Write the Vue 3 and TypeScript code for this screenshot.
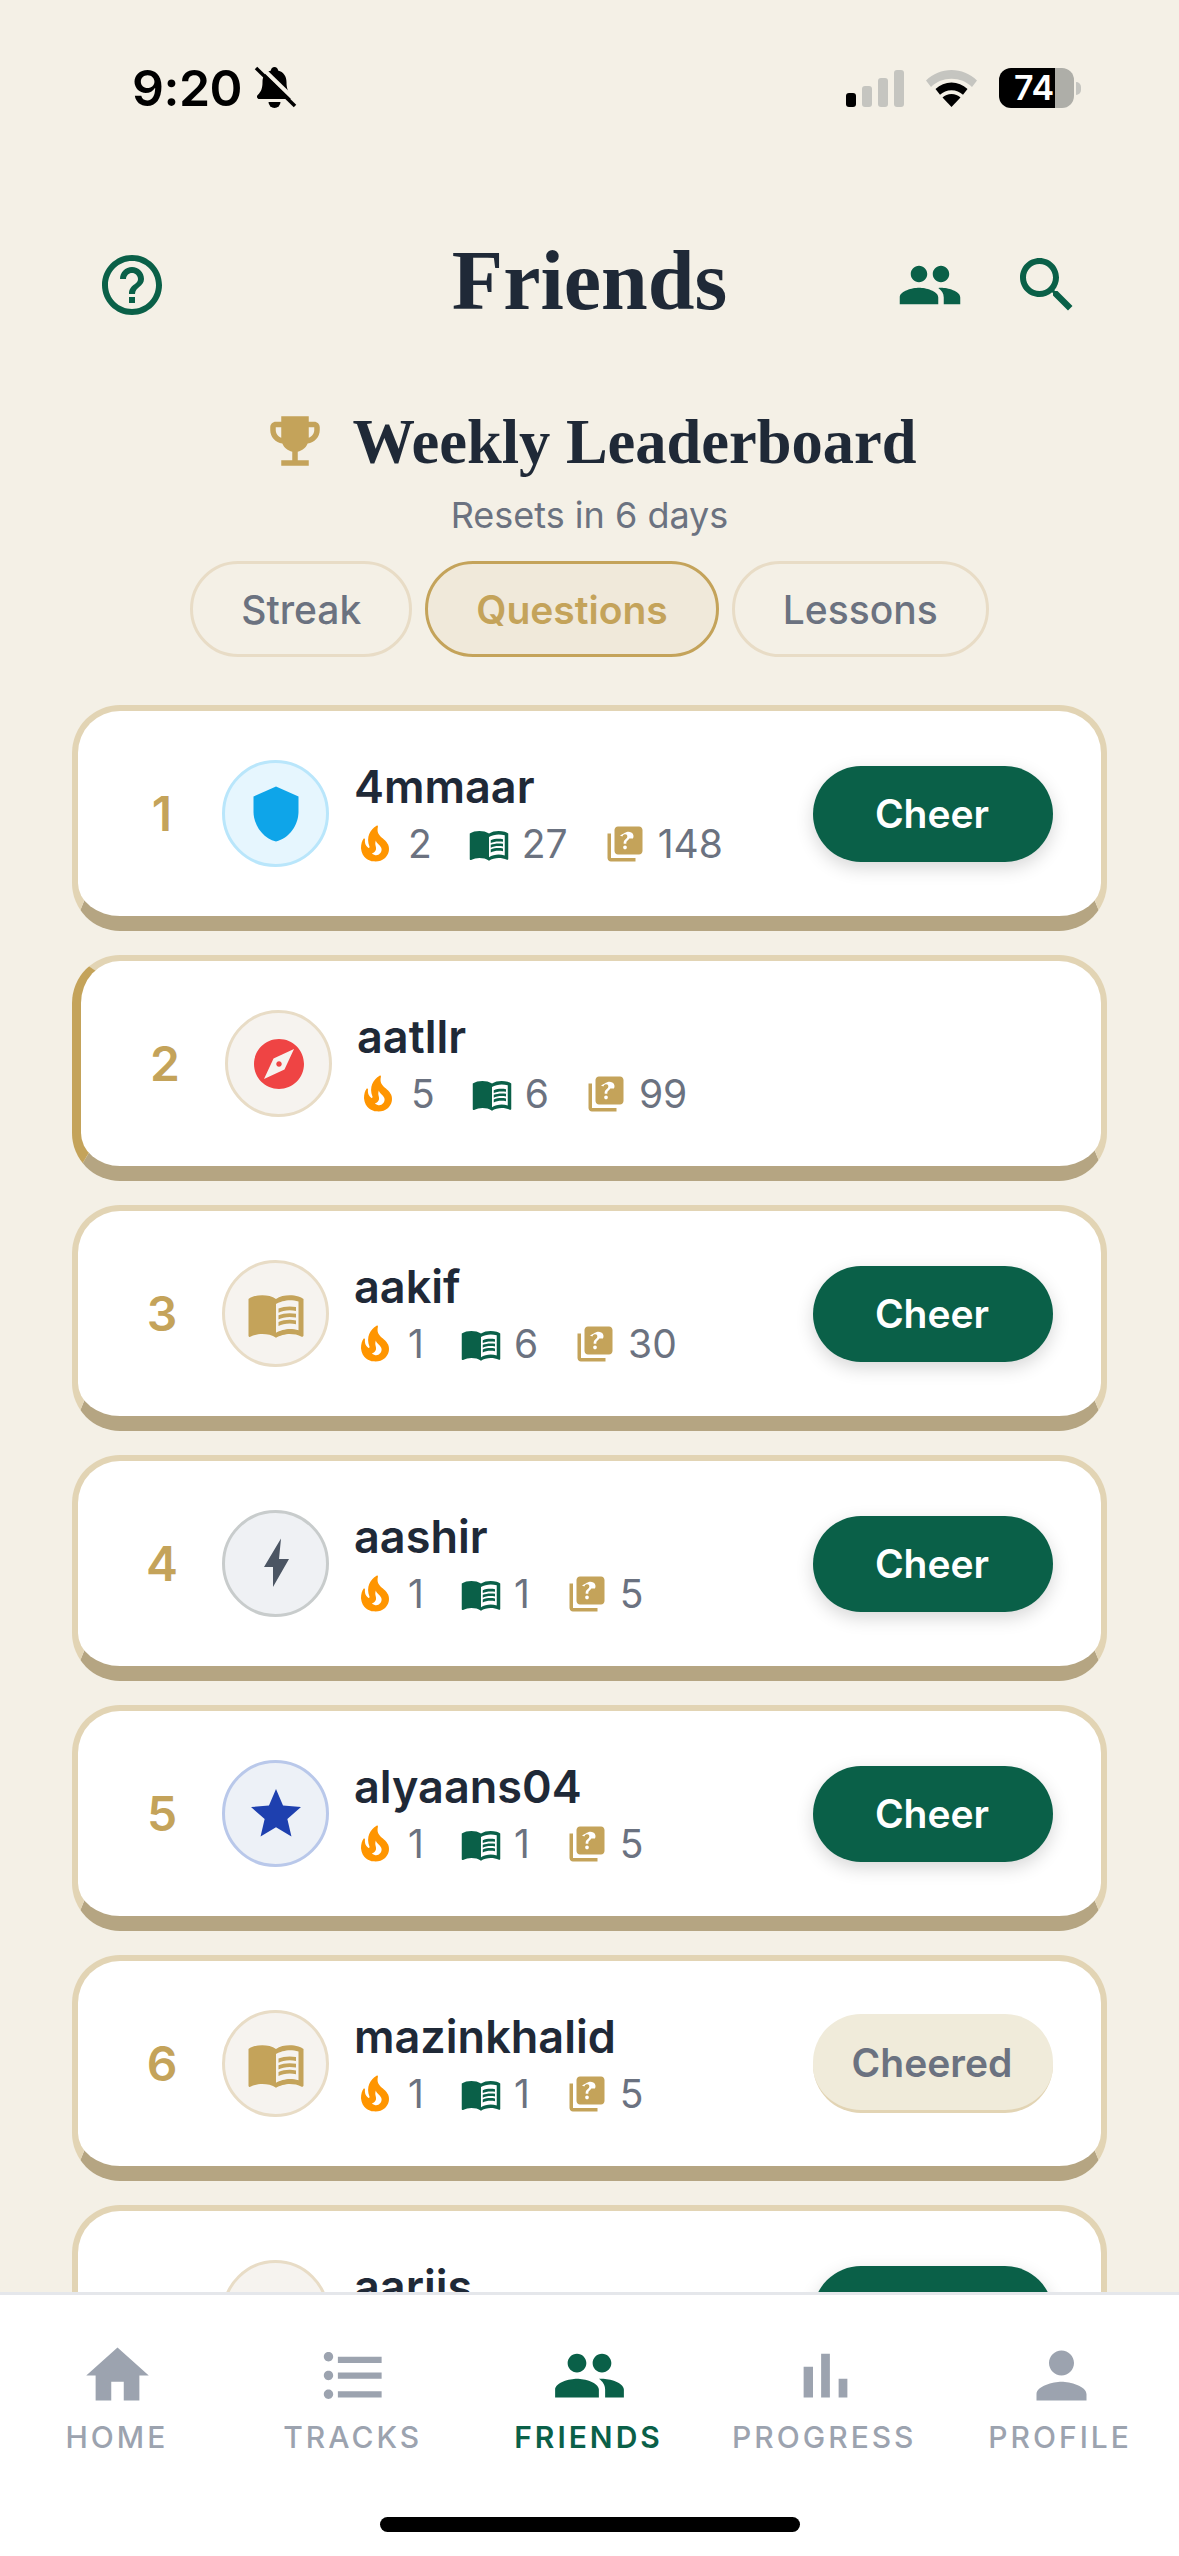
<script setup lang="ts">
type Icon = 'shield' | 'compass' | 'book' | 'bolt' | 'star'

interface Row {
  rank: number
  name: string
  streak: number
  lessons: number
  questions: number
  icon: Icon
  tone: string
  button: 'cheer' | 'cheered' | 'none'
  self?: boolean
}

const paths = {
  help: 'M11 18h2v-2h-2v2zm1-16C6.48 2 2 6.48 2 12s4.48 10 10 10 10-4.48 10-10S17.52 2 12 2zm0 18c-4.41 0-8-3.59-8-8s3.59-8 8-8 8 3.59 8 8-3.59 8-8 8zm0-14c-2.21 0-4 1.79-4 4h2c0-1.1.9-2 2-2s2 .9 2 2c0 2-3 1.75-3 5h2c0-2.25 3-2.5 3-5 0-2.21-1.79-4-4-4z',
  people: 'M16 11c1.66 0 2.99-1.34 2.99-3S17.66 5 16 5c-1.66 0-3 1.34-3 3s1.34 3 3 3zm-8 0c1.66 0 2.99-1.34 2.99-3S9.66 5 8 5C6.34 5 5 6.34 5 8s1.34 3 3 3zm0 2c-2.33 0-7 1.17-7 3.5V19h14v-2.5c0-2.33-4.67-3.5-7-3.5zm8 0c-.29 0-.62.02-.97.05 1.16.84 1.97 1.97 1.97 3.45V19h6v-2.5c0-2.33-4.67-3.5-7-3.5z',
  search: 'M15.5 14h-.79l-.28-.27C15.41 12.59 16 11.11 16 9.5 16 5.91 13.09 3 9.5 3S3 5.91 3 9.5 5.91 16 9.5 16c1.61 0 3.09-.59 4.23-1.57l.27.28v.79l5 4.99L20.49 19l-4.99-5zm-6 0C7.01 14 5 11.99 5 9.5S7.01 5 9.5 5 14 7.01 14 9.5 11.99 14 9.5 14z',
  trophy: 'M19 5h-2V3H7v2H5c-1.1 0-2 .9-2 2v1c0 2.55 1.92 4.63 4.39 4.94.63 1.5 1.98 2.63 3.61 2.96V19H7v2h10v-2h-4v-3.1c1.63-.33 2.98-1.46 3.61-2.96C19.08 12.63 21 10.55 21 8V7c0-1.1-.9-2-2-2zM5 8V7h2v3.82C5.84 10.4 5 9.3 5 8zm14 0c0 1.3-.84 2.4-2 2.82V7h2v1z',
  fire: 'M19.48 12.35c-1.57-4.08-7.16-4.3-5.81-10.23.1-.44-.37-.78-.75-.55C9.29 3.71 6.68 8 8.87 13.62c.18.46-.36.89-.75.59-1.81-1.37-2-3.34-1.84-4.75.06-.52-.62-.77-.91-.34C4.69 10.16 4 11.84 4 14.37c.38 5.6 5.11 7.32 6.81 7.54 2.43.31 5.06-.14 6.95-1.87 2.08-1.93 2.84-5.01 1.72-7.69zm-9.28 5.03c1.44-.35 2.18-1.39 2.38-2.31.33-1.43-.96-2.83-.09-5.09.33 1.87 3.27 3.04 3.27 5.08.08 2.53-2.66 4.7-5.56 2.32z',
  book: 'M21 5c-1.11-.35-2.33-.5-3.5-.5-1.95 0-4.05.4-5.5 1.5-1.45-1.1-3.55-1.5-5.5-1.5S2.45 4.9 1 6v14.65c0 .25.25.5.5.5.1 0 .15-.05.25-.05C3.1 20.45 5.05 20 6.5 20c1.95 0 4.05.4 5.5 1.5 1.35-.85 3.8-1.5 5.5-1.5 1.65 0 3.35.3 4.75 1.05.1.05.15.05.25.05.25 0 .5-.25.5-.5V6c-.6-.45-1.25-.75-2-1zm0 13.5c-1.1-.35-2.3-.5-3.5-.5-1.7 0-4.15.65-5.5 1.5V8c1.35-.85 3.8-1.5 5.5-1.5 1.2 0 2.4.15 3.5.5v11.5zM17.5 10.5c.88 0 1.73.09 2.5.26V9.24c-.79-.15-1.64-.24-2.5-.24-1.7 0-3.24.29-4.5.83v1.66c1.13-.64 2.7-.99 4.5-.99zM13 12.49v1.66c1.13-.64 2.7-.99 4.5-.99.88 0 1.73.09 2.5.26V11.9c-.79-.15-1.64-.24-2.5-.24-1.7 0-3.24.3-4.5.83zM17.5 14.33c-1.7 0-3.24.29-4.5.83v1.66c1.13-.64 2.7-.99 4.5-.99.88 0 1.73.09 2.5.26v-1.52c-.79-.16-1.64-.24-2.5-.24z',
  quiz: 'M4 6H2v14c0 1.1.9 2 2 2h14v-2H4V6zm16-4H8c-1.1 0-2 .9-2 2v12c0 1.1.9 2 2 2h12c1.1 0 2-.9 2-2V4c0-1.1-.9-2-2-2zm-7.99 13c-.59 0-1.05-.47-1.05-1.05 0-.59.47-1.04 1.05-1.04.59 0 1.04.45 1.04 1.04 0 .58-.45 1.05-1.04 1.05zm2.5-6.17c-.63.93-1.23 1.21-1.56 1.81-.13.24-.18.4-.18 1.18h-1.52c0-.41-.06-1.08.26-1.65.41-.73 1.18-1.16 1.63-1.8.48-.68.21-1.94-1.14-1.94-.88 0-1.32.67-1.5 1.23l-1.37-.57C11.51 5.96 12.52 5 13.99 5c1.23 0 2.08.56 2.51 1.26.37.61.58 1.73.01 2.57z',
  shield: 'M12 1 3 5v6c0 5.55 3.84 10.74 9 12 5.16-1.26 9-6.45 9-12V5l-9-4z',
  compass: 'M12 10.9c-.61 0-1.1.49-1.1 1.1s.49 1.1 1.1 1.1c.61 0 1.1-.49 1.1-1.1s-.49-1.1-1.1-1.1zM12 2C6.48 2 2 6.48 2 12s4.48 10 10 10 10-4.48 10-10S17.52 2 12 2zm2.19 12.19L6 18l3.81-8.19L18 6l-3.81 8.19z',
  bolt: 'M14 1.8 7.2 13.2h3.6v8L17.2 10h-4z',
  star: 'M12 17.27 18.18 21l-1.64-7.03L22 9.24l-7.19-.61L12 2 9.19 8.63 2 9.24l5.46 4.73L5.82 21z',
  home: 'M10 20v-6h4v6h5v-8h3L12 3 2 12h3v8z',
  list: 'M4 10.5c-.83 0-1.5.67-1.5 1.5s.67 1.5 1.5 1.5 1.5-.67 1.5-1.5-.67-1.5-1.5-1.5zm0-6c-.83 0-1.5.67-1.5 1.5S3.17 7.5 4 7.5 5.5 6.83 5.5 6 4.83 4.5 4 4.5zm0 12c-.83 0-1.5.68-1.5 1.5s.68 1.5 1.5 1.5 1.5-.68 1.5-1.5-.67-1.5-1.5-1.5zM7 19h14v-2H7v2zm0-6h14v-2H7v2zm0-7v2h14V6H7z',
  chart: 'M5 9.2h3V19H5zM10.6 5h2.8v14h-2.8zm5.6 8H19v6h-2.8z',
  person: 'M12 12c2.21 0 4-1.79 4-4s-1.79-4-4-4-4 1.79-4 4 1.79 4 4 4zm0 2c-2.67 0-8 1.34-8 4v2h16v-2c0-2.66-5.33-4-8-4z',
}

const rows: Row[] = [
  { rank: 1, name: '4mmaar', streak: 2, lessons: 27, questions: 148, icon: 'shield', tone: 'sky', button: 'cheer' },
  { rank: 2, name: 'aatllr', streak: 5, lessons: 6, questions: 99, icon: 'compass', tone: 'sand', button: 'none', self: true },
  { rank: 3, name: 'aakif', streak: 1, lessons: 6, questions: 30, icon: 'book', tone: 'sand', button: 'cheer' },
  { rank: 4, name: 'aashir', streak: 1, lessons: 1, questions: 5, icon: 'bolt', tone: 'grey', button: 'cheer' },
  { rank: 5, name: 'alyaans04', streak: 1, lessons: 1, questions: 5, icon: 'star', tone: 'navy', button: 'cheer' },
  { rank: 6, name: 'mazinkhalid', streak: 1, lessons: 1, questions: 5, icon: 'book', tone: 'sand', button: 'cheered' },
  { rank: 7, name: 'aariis', streak: 1, lessons: 1, questions: 5, icon: 'book', tone: 'sand', button: 'cheer' },
]

const tabs = [
  { label: 'HOME', icon: paths.home },
  { label: 'TRACKS', icon: paths.list },
  { label: 'FRIENDS', icon: paths.people, active: true },
  { label: 'PROGRESS', icon: paths.chart },
  { label: 'PROFILE', icon: paths.person },
]

const filters = ['Streak', 'Questions', 'Lessons']
</script>

<template>
  <div class="screen">
    <div class="status">
      <div class="status-left">
        <span class="time">9:20</span>
        <svg class="bell" width="41" height="42" viewBox="0 0 41 42">
          <path d="M19.500 0c2 0 3.400 1.500 3.600 3.400 5.400 1.400 8.400 6 8.400 11.600 0 6 1.200 9.500 4.800 13 1.400 1.400 .6 4-1.600 4H4.300c-2.200 0-3-2.600-1.600-4C6.300 24.500 7.500 21 7.500 15c0-5.600 3-10.200 8.400-11.600C16.100 1.500 17.500 0 19.500 0z" />
          <path d="M13.500 35h12a6 6 0 0 1-12 0z" />
          <path class="bell-cut" d="M5 -1 42 35" />
          <path class="bell-line" d="M1 1 40 39" />
        </svg>
      </div>
      <div class="status-right">
        <div class="signal">
          <i class="on" style="height: 14px" />
          <i style="height: 21px" />
          <i style="height: 29px" />
          <i style="height: 37px" />
        </div>
        <svg class="wifi" width="51" height="37" viewBox="0 0 51 37">
          <path fill="#c5c5c0" d="M25.500 0C35 0 44 3.800 51 10.500l-5 6.500C40.500 11.700 33.300 8.800 25.500 8.800S10.500 11.700 5 17L0 10.500C7 3.800 16 0 25.500 0z" />
          <path d="M25.500 12.500c6 0 11.500 2.300 16 6.500l-4.500 5.800c-3-2.900-7-4.600-11.500-4.600S17 21.900 14 24.800L9.500 19c4.500-4.200 10-6.500 16-6.500z" />
          <path d="M25.500 24c3.500 0 6.600 1.300 9 3.600L25.500 37l-9-9.400c2.400-2.300 5.500-3.600 9-3.600z" />
        </svg>
        <div class="battery">
          <div class="battery-body"><span>74</span></div>
          <div class="battery-cap" />
        </div>
      </div>
    </div>

    <header class="header">
      <svg class="icon-btn" width="72" height="72" viewBox="0 0 24 24"><path :d="paths.help" /></svg>
      <h1>Friends</h1>
      <div class="header-actions">
        <svg width="66" height="66" viewBox="0 0 24 24"><path :d="paths.people" /></svg>
        <svg width="72" height="72" viewBox="0 0 24 24"><path :d="paths.search" /></svg>
      </div>
    </header>

    <section class="board-head">
      <div class="board-title">
        <svg width="66" height="66" viewBox="0 0 24 24"><path :d="paths.trophy" /></svg>
        <h2>Weekly Leaderboard</h2>
      </div>
      <p>Resets in 6 days</p>
      <div class="filters">
        <button v-for="f in filters" :key="f" class="filter" :class="{ active: f === 'Questions' }">{{ f }}</button>
      </div>
    </section>

    <div class="list">
      <div v-for="row in rows" :key="row.rank" class="card" :class="{ self: row.self }">
        <div class="rank">{{ row.rank }}</div>
        <div class="avatar" :class="`tone-${row.tone}`">
          <svg width="60" height="60" viewBox="0 0 24 24" :class="`glyph-${row.icon}`"><path :d="paths[row.icon]" /></svg>
        </div>
        <div class="info">
          <div class="name">{{ row.name }}</div>
          <div class="stats">
            <div class="stat">
              <svg width="42" height="42" viewBox="0 0 24 24" fill="#ff9500"><path :d="paths.fire" /></svg>
              <span>{{ row.streak }}</span>
            </div>
            <div class="stat">
              <svg width="42" height="42" viewBox="0 0 24 24" fill="#0a6048"><path :d="paths.book" /></svg>
              <span>{{ row.lessons }}</span>
            </div>
            <div class="stat">
              <svg width="42" height="42" viewBox="0 0 24 24" fill="#c4a35a"><path :d="paths.quiz" /></svg>
              <span>{{ row.questions }}</span>
            </div>
          </div>
        </div>
        <button v-if="row.button === 'cheer'" class="cheer">Cheer</button>
        <button v-else-if="row.button === 'cheered'" class="cheer cheered">Cheered</button>
      </div>
    </div>

    <nav class="tabbar">
      <div v-for="t in tabs" :key="t.label" class="tab" :class="{ active: t.active }">
        <svg width="75" height="75" viewBox="0 0 24 24"><path :d="t.icon" /></svg>
        <span>{{ t.label }}</span>
      </div>
      <div class="home-bar" />
    </nav>
  </div>
</template>

<style scoped>
.screen {
  width: 1179px;
  height: 2556px;
  display: flex;
  flex-direction: column;
  overflow: hidden;
  position: relative;
  background: #f4f0e6;
  font-family: Inter, 'Liberation Sans', sans-serif;
  color: #1f2937;
}

.status {
  height: 112px;
  padding: 64px 98px 0 132px;
  box-sizing: border-box;
  flex-shrink: 0;
  display: flex;
  justify-content: space-between;
  align-items: center;
  color: #000;
}
.status-left {
  display: flex;
  align-items: center;
  gap: 13px;
}
.time {
  font-size: 50px;
  font-weight: 600;
  line-height: 48px;
  letter-spacing: -0.5px;
}
.bell {
  overflow: visible;
}
.bell-cut {
  stroke: #f4f0e6;
  stroke-width: 4;
  fill: none;
}
.bell-line {
  stroke: #000;
  stroke-width: 3.5;
  fill: none;
}
.status-right {
  display: flex;
  align-items: center;
  gap: 22px;
}
.signal {
  display: flex;
  align-items: flex-end;
  gap: 6px;
  height: 37px;
}
.signal i {
  width: 10px;
  border-radius: 3px;
  background: #c5c5c0;
}
.signal i.on {
  background: #000;
}
.battery {
  display: flex;
  align-items: center;
  gap: 2px;
}
.battery-body {
  width: 75px;
  height: 40px;
  border-radius: 12px;
  background: linear-gradient(90deg, #000 74.6%, #aeaea8 74.6%);
  display: flex;
  align-items: center;
  padding-left: 15px;
  box-sizing: border-box;
}
.battery-body span {
  color: #fff;
  font-size: 34px;
  font-weight: 600;
  line-height: 40px;
}
.battery-cap {
  width: 5px;
  height: 13px;
  border-radius: 0 6px 6px 0;
  background: #c5c5c0;
}

.header {
  margin-top: 137px;
  padding: 0 96px;
  display: grid;
  grid-template-columns: 1fr auto 1fr;
  align-items: center;
  height: 72px;
  flex-shrink: 0;
}
.header svg {
  fill: #0a6048;
  display: block;
}
.header h1 {
  margin: 0;
  padding-bottom: 8px;
  font-family: 'Liberation Serif', serif;
  font-size: 84px;
  font-weight: 700;
  line-height: 64px;
}
.header-actions {
  display: flex;
  justify-content: flex-end;
  align-items: center;
  gap: 48px;
}

.board-head {
  margin-top: 87px;
  display: flex;
  flex-direction: column;
  align-items: center;
  flex-shrink: 0;
}
.board-title {
  display: flex;
  align-items: center;
  gap: 24px;
  height: 66px;
}
.board-title svg {
  fill: #c4a35a;
}
.board-title h2 {
  margin: 0;
  padding-top: 2px;
  font-family: 'Liberation Serif', serif;
  font-size: 62.5px;
  font-weight: 700;
  line-height: 66px;
}
.board-head p {
  margin: 18px 0 0;
  font-size: 36px;
  line-height: 46px;
  color: #6b7280;
}
.filters {
  display: flex;
  gap: 13px;
  margin-top: 23px;
}
.filter {
  height: 96px;
  padding: 0 48px;
  box-sizing: border-box;
  border: 3px solid #e8dcc6;
  border-radius: 48px;
  background: transparent;
  font-family: inherit;
  font-size: 39px;
  font-weight: 500;
  color: #6b7280;
}
.filter.active {
  border-color: #c4a35a;
  background: #f0e9da;
  color: #c4a35a;
  font-weight: 600;
}

.list {
  margin-top: 48px;
  padding: 0 72px;
  flex: 1;
  min-height: 0;
  overflow: hidden;
  display: flex;
  flex-direction: column;
  gap: 24px;
}
.card {
  flex-shrink: 0;
  height: 226px;
  box-sizing: border-box;
  display: flex;
  align-items: center;
  background: #fff;
  border: 6px solid #e2d4b4;
  border-bottom: 15px solid #b5a582;
  border-radius: 48px;
  padding: 0 48px;
}
.card.self {
  border-left: 9px solid #c4a35a;
}
.rank {
  width: 72px;
  text-align: center;
  font-size: 48px;
  font-weight: 600;
  color: #c4a35a;
  flex-shrink: 0;
}
.avatar {
  width: 107px;
  height: 107px;
  margin-left: 24px;
  box-sizing: border-box;
  border-radius: 50%;
  border: 3px solid #e8dcc6;
  background: #f6f3ef;
  display: flex;
  align-items: center;
  justify-content: center;
  flex-shrink: 0;
}
.tone-sky {
  background: #e6f6fe;
  border-color: #b9e6fb;
}
.tone-grey {
  background: #eff1f4;
  border-color: #c8cccc;
}
.tone-navy {
  background: #edf1f7;
  border-color: #b9c8ea;
}
.glyph-shield { fill: #0ea5e9; }
.glyph-compass { fill: #ef4444; fill-rule: evenodd; }
.glyph-book { fill: #c4a35a; }
.glyph-bolt { fill: #4b5563; }
.glyph-star { fill: #1e40af; }

.info {
  margin-left: 25px;
  flex: 1;
  min-width: 0;
}
.name {
  font-size: 45px;
  font-weight: 600;
  line-height: 54px;
}
.stats {
  display: flex;
  gap: 36px;
  margin-top: 6px;
}
.stat {
  display: flex;
  align-items: center;
  gap: 12px;
  height: 48px;
  font-size: 39px;
  color: #6b7280;
}
.cheer {
  width: 240px;
  height: 96px;
  padding: 0 2px 0 0;
  flex-shrink: 0;
  border: 0;
  border-radius: 48px;
  background: #0a6048;
  color: #fff;
  font-family: inherit;
  font-size: 39px;
  font-weight: 600;
  box-shadow: 0 6px 18px rgba(0, 0, 0, 0.16);
}
.cheer.cheered {
  height: 99px;
  background: #f0ebda;
  border-bottom: 3px solid #e2d4b4;
  color: #6b7280;
  box-shadow: none;
}

.tabbar {
  height: 264px;
  box-sizing: border-box;
  flex-shrink: 0;
  border-top: 3px solid #e5e7eb;
  background: #fff;
  padding-top: 43px;
  display: grid;
  grid-template-columns: repeat(5, 1fr);
  align-items: start;
  position: relative;
}
.tab {
  display: flex;
  flex-direction: column;
  align-items: center;
  color: #9ca3af;
  fill: #9ca3af;
}
.tab.active {
  color: #0a6048;
  fill: #0a6048;
}
.tab span {
  margin-top: 6px;
  padding-right: 2px;
  font-size: 30px;
  line-height: 36px;
  font-weight: 500;
  letter-spacing: 3px;
}
.tab.active span {
  font-weight: 600;
}
.home-bar {
  position: absolute;
  left: 380px;
  bottom: 24px;
  width: 420px;
  height: 15px;
  border-radius: 8px;
  background: #000;
}
</style>
